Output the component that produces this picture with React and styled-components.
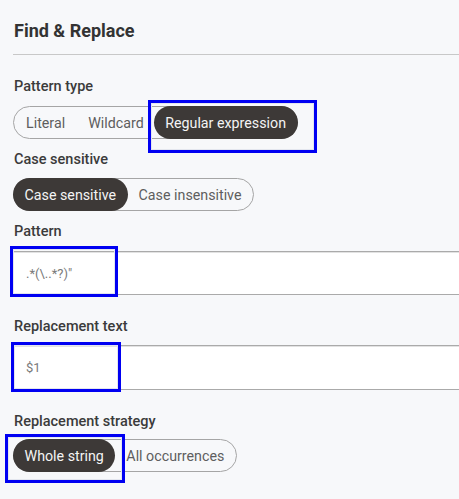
import styled, { createGlobalStyle } from 'styled-components'

const GlobalStyle = createGlobalStyle`
  html {
    overflow: hidden;
  }
  html, body {
    margin: 0;
    background: #f7f8fa;
  }
  body {
    font-family: Roboto, 'Liberation Sans', sans-serif;
  }
`

const Panel = styled.div`
  display: flex;
  flex-direction: column;
  align-items: flex-start;
  padding: 21px 0 30px 13px;
  width: 459px;
  box-sizing: border-box;
`

const Title = styled.h2`
  margin: 0 0 0 1px;
  font-size: 18px;
  line-height: 20px;
  font-weight: 700;
  color: #333;
`

const Divider = styled.hr`
  align-self: stretch;
  margin: 13px 0 0;
  border: none;
  border-top: 1px solid #c8c8c8;
`

const Label = styled.div`
  margin: ${p => p.$top}px 0 ${p => p.$bottom}px 1px;
  font-size: 14.5px;
  line-height: 16px;
  font-weight: 500;
  color: #3b3b3b;
`

const Toggle = styled.div`
  display: inline-flex;
  align-items: center;
  height: 33px;
  box-sizing: border-box;
  border: 1px solid #a5a5a5;
  border-radius: 17px;
`

const Option = styled.button`
  position: relative;
  display: flex;
  align-items: center;
  height: ${p => (p.$active ? '33px' : '31px')};
  margin: ${p => (p.$active ? '0 -1px' : '0')};
  padding: 0 ${p => p.$pad || 11.5}px;
  border: none;
  border-radius: 17px;
  background: ${p => (p.$active ? '#3d3937' : 'transparent')};
  color: ${p => (p.$active ? '#f4f4f4' : '#5e5e5e')};
  font-family: Roboto, 'Liberation Sans', sans-serif;
  font-size: 14.25px;
  white-space: nowrap;
  cursor: pointer;
`

const Field = styled.div`
  position: relative;
  width: 470px;
`

const Input = styled.input`
  display: block;
  width: 100%;
  height: ${p => p.$h}px;
  box-sizing: border-box;
  padding: 0 12px;
  border: 1px solid #aaa;
  box-shadow: inset 0 1px 0 #e2e2e2;
  background: #fff;
  color: #7a7a7a;
  font-family: Roboto, 'Liberation Sans', sans-serif;
  font-size: 13px;
  outline: none;
`

const Highlight = styled.span`
  position: absolute;
  left: ${p => p.$x}px;
  top: ${p => p.$y}px;
  width: ${p => p.$w}px;
  height: ${p => p.$h}px;
  box-sizing: border-box;
  border: 3px solid #0000f2;
  box-shadow: inset 0 0 0 1px #e3e6ee;
  pointer-events: none;
`

export default function App() {
  return (
    <>
      <GlobalStyle />
      <Panel>
        <Title>Find &amp; Replace</Title>
        <Divider />

        <Label $top={24} $bottom={11}>Pattern type</Label>
        <Toggle>
          <Option $pad={12}>Literal</Option>
          <Option $pad={11}>Wildcard</Option>
          <Option $active>
            Regular expression
            <Highlight $x={-6} $y={-6} $w={169} $h={53} />
          </Option>
        </Toggle>

        <Label $top={13} $bottom={10}>Case sensitive</Label>
        <Toggle>
          <Option $active>Case sensitive</Option>
          <Option $pad={12}>Case insensitive</Option>
        </Toggle>

        <Label $top={13} $bottom={11}>Pattern</Label>
        <Field>
          <Input $h={44} readOnly value={'.*(\\..*?)"'} />
          <Highlight $x={-3} $y={-5} $w={108} $h={51} />
        </Field>

        <Label $top={24} $bottom={10}>Replacement text</Label>
        <Field>
          <Input $h={45} readOnly value="$1" />
          <Highlight $x={-2} $y={-3} $w={110} $h={50} />
        </Field>

        <Label $top={24} $bottom={9}>Replacement strategy</Label>
        <Toggle>
          <Option $active>
            Whole string
            <Highlight $x={-8} $y={-5} $w={120} $h={49} />
          </Option>
          <Option $pad={12}>All occurrences</Option>
        </Toggle>
      </Panel>
    </>
  )
}
